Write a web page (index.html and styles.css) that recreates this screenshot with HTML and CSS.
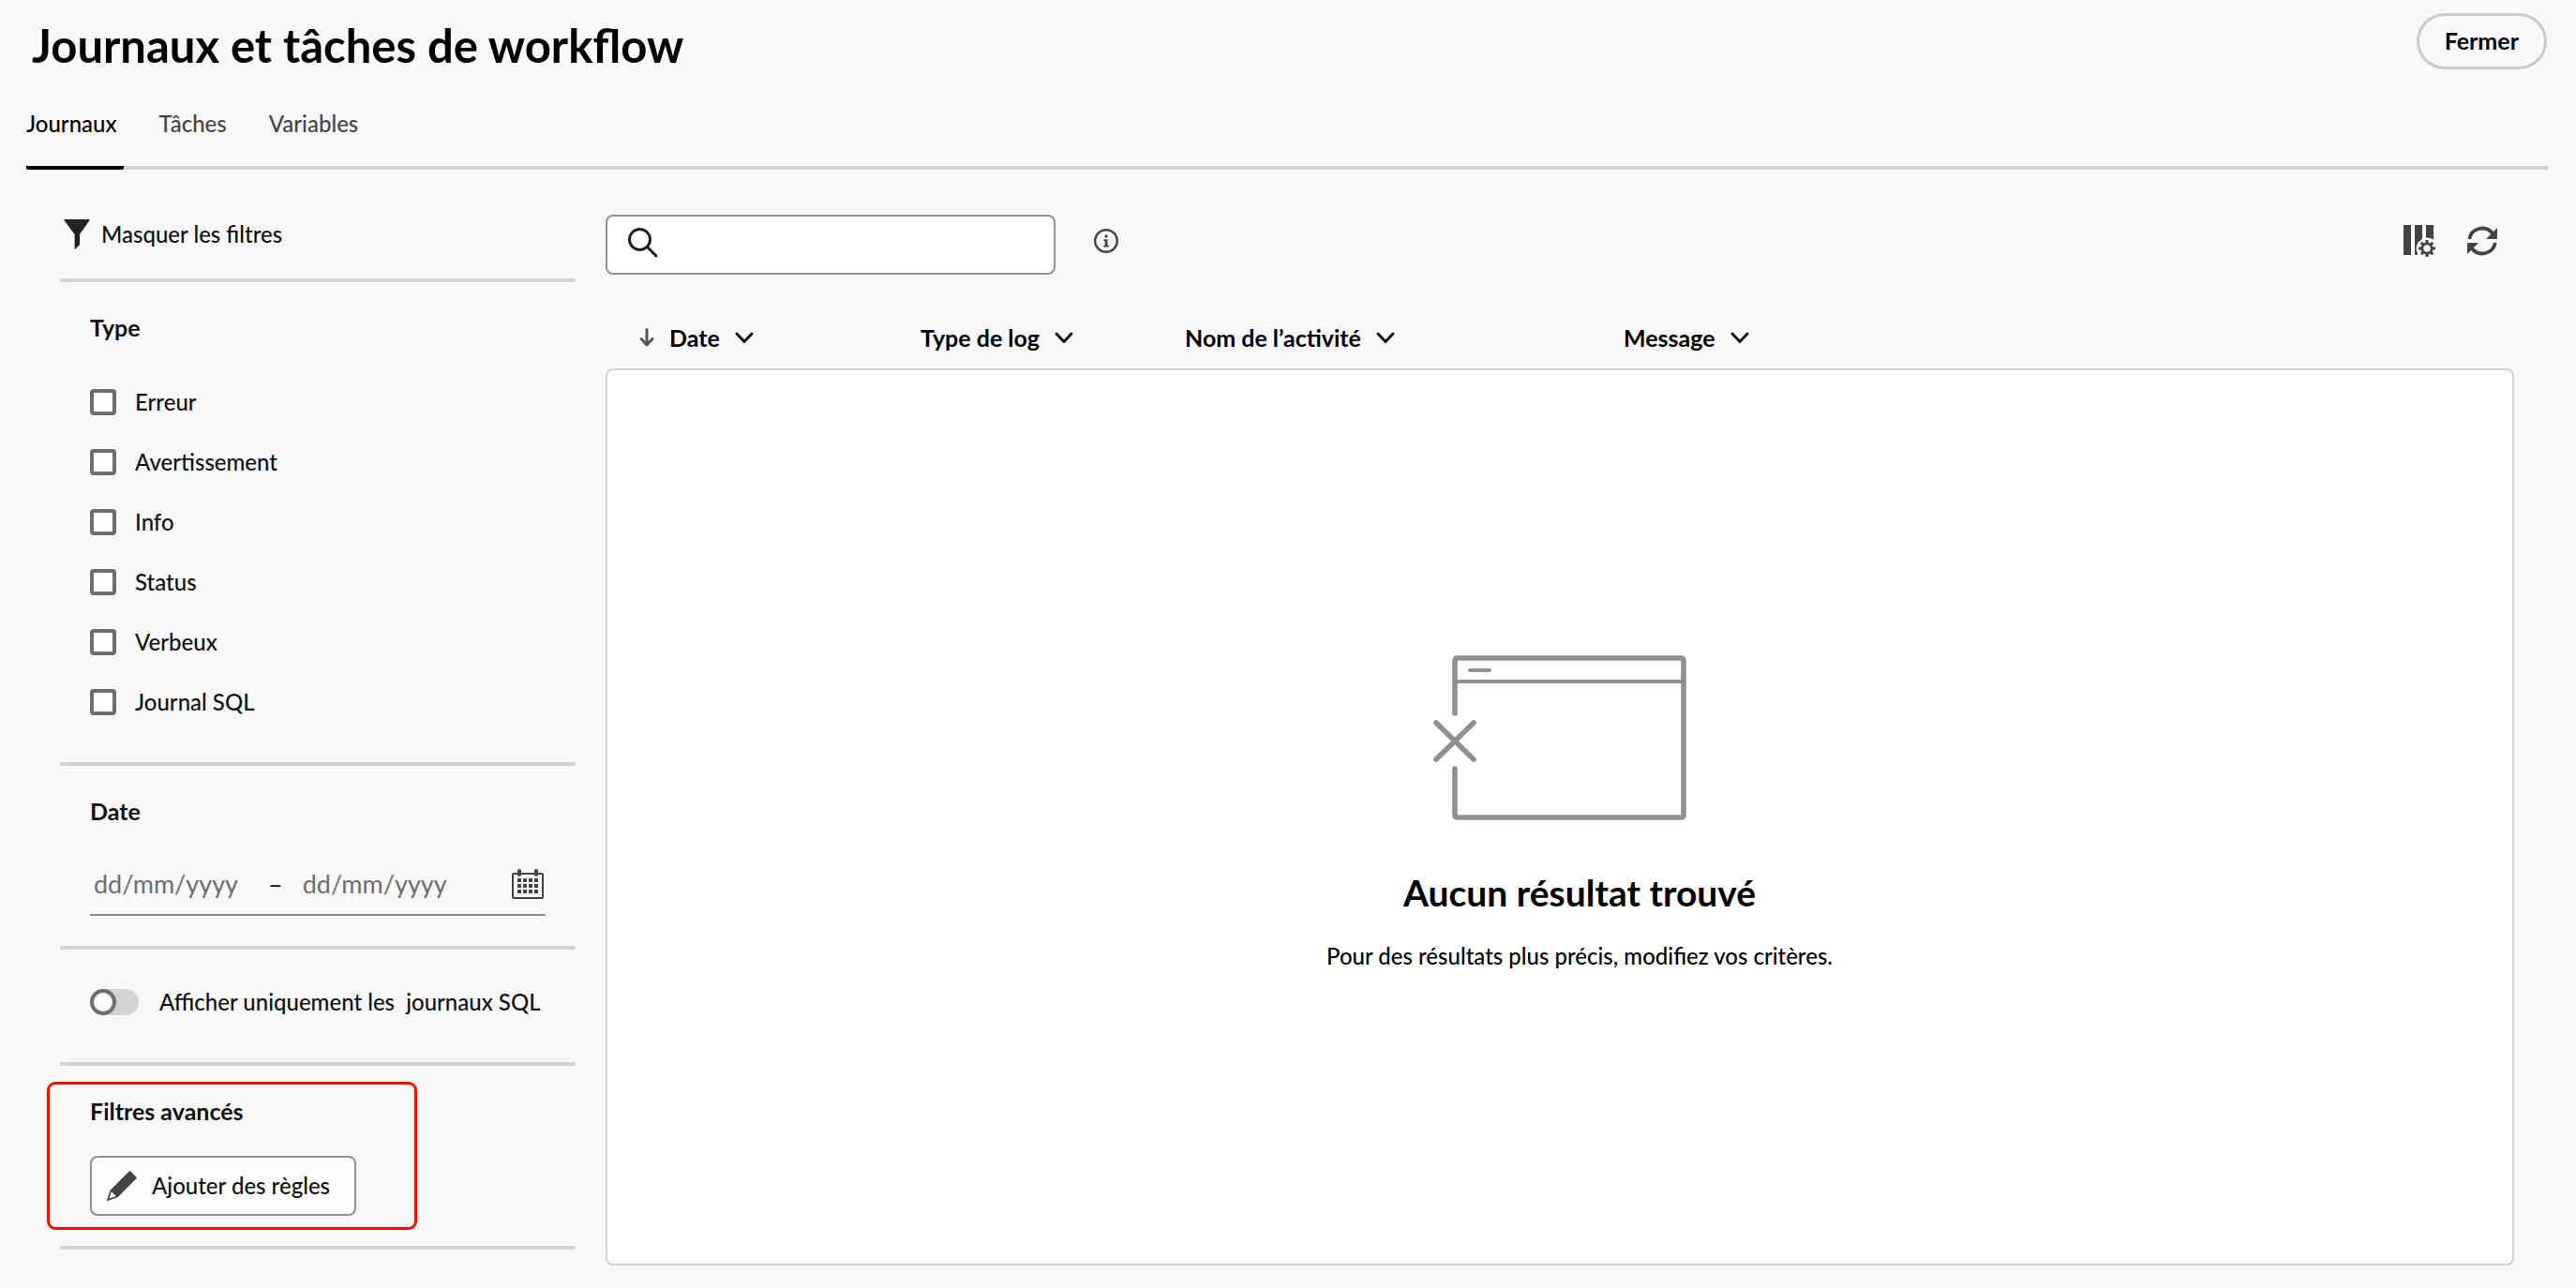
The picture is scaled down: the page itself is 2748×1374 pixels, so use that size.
FILE: index.html
```html
<!DOCTYPE html>
<html lang="fr">
<head>
<meta charset="utf-8">
<title>Journaux et tâches de workflow</title>
<link rel="stylesheet" href="styles.css">
</head>
<body>
<header class="page-header">
  <h1 class="page-title">Journaux et tâches de workflow</h1>
  <button type="button" class="close-button">Fermer</button>
</header>

<nav class="tabs">
  <a href="#journaux" class="tab tab-active" aria-current="page">Journaux</a>
  <a href="#taches" class="tab">Tâches</a>
  <a href="#variables" class="tab">Variables</a>
</nav>

<main class="layout">
  <aside class="filters">
    <button type="button" class="filters-toggle">
      <svg width="28" height="32" viewBox="0 0 28 32" aria-hidden="true"><path fill="#222" d="M1 0h26q1 0 .6 1L17 16v11l-4.500 4.500q-.9.800-.9-.5V16L.4 1Q0 0 1 0z"/></svg>
      Masquer les filtres
    </button>
    <hr class="divider">

    <section class="filter-section filter-types">
      <h2 class="filter-title">Type</h2>
      <div class="check-list">
        <label class="check"><input type="checkbox" class="check-box">Erreur</label>
        <label class="check"><input type="checkbox" class="check-box">Avertissement</label>
        <label class="check"><input type="checkbox" class="check-box">Info</label>
        <label class="check"><input type="checkbox" class="check-box">Status</label>
        <label class="check"><input type="checkbox" class="check-box">Verbeux</label>
        <label class="check"><input type="checkbox" class="check-box">Journal SQL</label>
      </div>
    </section>
    <hr class="divider">

    <section class="filter-section">
      <h2 class="filter-title">Date</h2>
      <div class="date-range">
        <input type="text" class="date-input" placeholder="dd/mm/yyyy" aria-label="Date de début">
        <span>–</span>
        <input type="text" class="date-input" placeholder="dd/mm/yyyy" aria-label="Date de fin">
        <button type="button" class="icon-button date-button" aria-label="Ouvrir le calendrier">
          <svg width="34" height="32" viewBox="0 0 34 32" aria-hidden="true"><rect x="1" y="5" width="32" height="26" rx="1" fill="none" stroke="#444" stroke-width="2"/><path stroke="#444" stroke-width="4" stroke-linecap="round" d="M8 2v4M26 2v4"/><path stroke="#444" stroke-width="4" stroke-dasharray="4 2" d="M6 12h22M6 18h22M6 24h22"/></svg>
        </button>
      </div>
    </section>
    <hr class="divider">

    <section class="filter-section filter-switch">
      <label class="switch"><input type="checkbox" role="switch" class="switch-input"><span>Afficher uniquement les&nbsp; journaux SQL</span></label>
    </section>
    <hr class="divider">

    <section class="advanced">
      <h2 class="filter-title">Filtres avancés</h2>
      <button type="button" class="rules-button">
        <svg width="32" height="32" viewBox="0 0 32 32" aria-hidden="true"><path fill="#444" fill-rule="evenodd" d="M23.500.8q1-1 2 0l5.700 5.700q1 1 0 2L12 27.700Q11.500 28.200 10.500 28.600L1 31.900q-1.200.3-.9-.9L3.400 21.500Q3.800 20.500 4.300 20zM4.800 22.500L2.500 29.500l7-2.300q-.2-1.800-1.500-2t-1.300-1.300q-.4-1.400-1.900-1.400z"/></svg>
        Ajouter des règles
      </button>
    </section>
    <hr class="divider">
  </aside>

  <section class="results">
    <div class="toolbar">
      <label class="search">
        <svg width="32" height="32" viewBox="0 0 32 32" aria-hidden="true"><circle cx="12.500" cy="12.500" r="11" fill="none" stroke="#222" stroke-width="3"/><path stroke="#222" stroke-width="3" stroke-linecap="round" d="M20.500 20.500L30 30"/></svg>
        <input type="search" class="search-input" aria-label="Rechercher">
      </label>
      <button type="button" class="icon-button" aria-label="Informations">
        <svg width="26" height="26" viewBox="0 0 26 26" aria-hidden="true"><circle cx="13" cy="13" r="11.800" fill="none" stroke="#444" stroke-width="2.400"/><circle cx="13" cy="8" r="1.700" fill="#444"/><path fill="#444" d="M10.500 11.200h4v6.600h1.300v1.700h-5.600v-1.700h1.500v-4.900h-1.200z"/></svg>
      </button>
      <div class="toolbar-actions">
        <button type="button" class="icon-button" aria-label="Configurer les colonnes">
          <svg width="34" height="34" viewBox="0 0 34 34" fill="#444" aria-hidden="true"><rect width="8" height="32" rx="1"/><path d="M12 1q0-1 1-1h7v14.500q-1.500 2-4 3.500a11.500 11.500 0 0 0-1.500 11l.5 3H13q-1 0-1-1z"/><path d="M24 0h7q1 0 1 1v14.500q-3.500-2.200-8-2z"/><circle cx="25" cy="25" r="5.200" fill="none" stroke="#444" stroke-width="2.800"/><path stroke="#444" stroke-width="3" d="M25 16v3M25 31v3M16 25h3M31 25h3M18.800 18.800l2 2M29.200 29.200l2 2M31.200 18.800l-2 2M20.800 29.200l-2 2"/></svg>
        </button>
        <button type="button" class="icon-button" aria-label="Actualiser">
          <svg width="32" height="32" viewBox="0 0 32 32" aria-hidden="true"><path fill="none" stroke="#444" stroke-width="3.800" d="M2.200 14A14 14 0 0 1 27 8M29.800 18A14 14 0 0 1 5 24"/><path fill="#444" d="M32 2v11q0 1-1 1H20zM0 30V19q0-1 1-1h11z"/></svg>
        </button>
      </div>
    </div>

    <table class="log-table">
      <colgroup><col class="col-date"><col class="col-type"><col class="col-activity"><col></colgroup>
      <thead>
        <tr>
          <th scope="col" class="cell-first"><button type="button" class="sort">
            <svg width="16" height="20" viewBox="0 0 16 20" aria-hidden="true"><path fill="none" stroke="#555" stroke-width="3" stroke-linecap="round" stroke-linejoin="round" d="M8 1.500v16M2 11.500l6 6.500 6-6.500"/></svg>
            Date
            <svg width="20" height="13" viewBox="0 0 20 13" aria-hidden="true"><path class="chevron" d="M2 2l8 8.500L18 2"/></svg></button></th>
          <th scope="col"><button type="button" class="sort">Type de log
            <svg width="20" height="13" viewBox="0 0 20 13" aria-hidden="true"><path class="chevron" d="M2 2l8 8.500L18 2"/></svg></button></th>
          <th scope="col"><button type="button" class="sort">Nom de l’activité
            <svg width="20" height="13" viewBox="0 0 20 13" aria-hidden="true"><path class="chevron" d="M2 2l8 8.500L18 2"/></svg></button></th>
          <th scope="col"><button type="button" class="sort">Message
            <svg width="20" height="13" viewBox="0 0 20 13" aria-hidden="true"><path class="chevron" d="M2 2l8 8.500L18 2"/></svg></button></th>
        </tr>
      </thead>
      <tbody>
        <tr>
          <td colspan="4" class="empty">
            <svg class="empty-art" width="270" height="176" viewBox="0 0 270 176" fill="none" stroke="#909090" stroke-linecap="round" stroke-linejoin="round" aria-hidden="true"><path stroke-width="5.600" d="M23 62V6q0-3 3-3h238q3 0 3 3v164q0 3-3 3H26q-3 0-3-3v-49"/><path stroke-width="4" d="M24 28h242M39 16h21"/><path stroke-width="5.600" d="M3 72l40 39M43 72L3 111"/></svg>
            <div class="empty-text">
              <h2 class="empty-title">Aucun résultat trouvé</h2>
              <p class="empty-hint">Pour des résultats plus précis, modifiez vos critères.</p>
            </div>
          </td>
        </tr>
      </tbody>
    </table>
  </section>
</main>
</body>
</html>
```
FILE: styles.css
```css
*,
*::before {
  box-sizing: border-box;
}

body {
  margin: 0;
  background: #f8f8f8;
  color: #111;
  font-family: Lato, "Noto Sans", sans-serif;
  font-size: 24px;
  font-weight: 500;
  line-height: 32px;
}

h1,
h2,
p {
  margin: 0;
}

button,
input {
  margin: 0;
  padding: 0;
  border: 0;
  background: none;
  color: inherit;
  font: inherit;
}

svg {
  display: block;
  flex: none;
  overflow: visible;
}

/* Header */

.page-header {
  display: flex;
  align-items: flex-start;
  justify-content: space-between;
  padding: 14px 31px 0 34px;
}

.page-title {
  color: #000;
  font-size: 49px;
  font-weight: 700;
  line-height: 68px;
}

.close-button {
  height: 60px;
  padding: 0 27px 2px;
  border: 3px solid #cacaca;
  border-radius: 30px;
  color: #000;
  font-size: 25px;
  font-weight: 700;
}

.tabs {
  display: flex;
  gap: 38px;
  margin: 34px 30px 0 28px;
  border-bottom: 4px solid #d3d3d3;
}

.tab {
  margin-bottom: -4px;
  padding: 0 7px 29px 0;
  border-bottom: 4px solid transparent;
  color: #444;
  text-decoration: none;
}

.tab-active {
  border-color: #000;
  border-radius: 2px;
  color: #000;
}

/* Page columns */

.layout {
  display: grid;
  grid-template-columns: 550px minmax(0, 1fr);
  gap: 32px;
  padding: 0 66px 24px 64px;
}

/* Filter panel */

.filters {
  padding-top: 53px;
}

.filters-toggle {
  display: flex;
  align-items: center;
  gap: 12px;
  margin: 0 0 31px 4px;
}

.divider {
  height: 4px;
  margin: 0;
  border: 0;
  border-radius: 2px;
  background: #d3d3d3;
}

.filter-section {
  padding: 32px;
}

.filter-types {
  padding-bottom: 48px;
}

.filter-title {
  font-size: 25px;
  font-weight: 700;
  line-height: 32px;
}

.check-list {
  display: flex;
  flex-direction: column;
  align-items: flex-start;
  gap: 32px;
  margin-top: 48px;
}

.check {
  display: flex;
  align-items: center;
  gap: 20px;
}

.check-box {
  appearance: none;
  width: 28px;
  height: 28px;
  border: 4px solid #6e6e6e;
  border-radius: 4px;
  background: #fff;
}

.date-range {
  display: flex;
  align-items: center;
  gap: 21px;
  margin-top: 46px;
  padding: 0 2px 16px 4px;
  border-bottom: 2px solid #909090;
  font-size: 27px;
  font-weight: 400;
}

.date-input {
  width: 165px;
  height: 32px;
}

.date-input::placeholder {
  color: #6e6e6e;
  opacity: 1;
}

.date-button {
  margin-left: auto;
}

.filter-switch {
  padding: 40px 32px 48px;
}

.switch {
  display: flex;
  align-items: center;
  gap: 22px;
  white-space: nowrap;
}

.switch-input {
  appearance: none;
  display: flex;
  flex: none;
  width: 52px;
  height: 28px;
  border-radius: 14px;
  background: #d3d3d3;
}

.switch-input::before {
  content: "";
  width: 28px;
  height: 28px;
  border: 4px solid #6e6e6e;
  border-radius: 50%;
  background: #fff;
}

/* Outlined call-out around the advanced filters */

.advanced {
  width: 395px;
  margin: 17px 0 17px -14px;
  padding: 12px 43px;
  border: 3px solid #f01000;
  border-radius: 9px;
}

.rules-button {
  display: flex;
  align-items: center;
  gap: 16px;
  height: 64px;
  margin-top: 32px;
  padding: 0 26px 0 16px;
  border: 2px solid #909090;
  border-radius: 8px;
  background: #fdfdfd;
  white-space: nowrap;
}

/* Results */

.results {
  padding-top: 48px;
}

.toolbar {
  display: flex;
  align-items: flex-start;
  gap: 41px;
  padding-right: 18px;
}

.search {
  display: flex;
  align-items: center;
  gap: 16px;
  width: 480px;
  height: 64px;
  padding: 0 22px 4px;
  border: 2px solid #909090;
  border-radius: 8px;
  background: #fff;
}

.search-input {
  flex: 1;
  min-width: 0;
  outline: 0;
}

.icon-button {
  display: flex;
  align-items: center;
  justify-content: center;
}

.toolbar .icon-button {
  height: 56px;
}

.toolbar-actions {
  display: flex;
  gap: 34px;
  margin-left: auto;
}

.log-table {
  width: 100%;
  border-spacing: 0;
  table-layout: fixed;
}

.col-date {
  width: 336px;
}

.col-type {
  width: 282px;
}

.col-activity {
  width: 468px;
}

.log-table th {
  padding: 51px 0 17px;
  text-align: left;
}

.log-table .cell-first {
  padding-left: 36px;
}

.sort {
  display: flex;
  align-items: center;
  gap: 16px;
  color: #000;
  font-size: 25px;
  font-weight: 700;
  line-height: 32px;
  white-space: nowrap;
}

.chevron {
  fill: none;
  stroke: #111;
  stroke-width: 3;
  stroke-linecap: round;
  stroke-linejoin: round;
}

.empty {
  padding: 304px 0 312px;
  border: 2px solid #d3d3d3;
  border-radius: 8px;
  background: #fff;
  color: #000;
  text-align: center;
}

.empty-art {
  margin: 0 auto 53px;
}

.empty-text {
  padding-left: 42px;
}

.empty-title {
  font-size: 39px;
  font-weight: 700;
  line-height: 48px;
}

.empty-hint {
  margin-top: 28px;
}
```
